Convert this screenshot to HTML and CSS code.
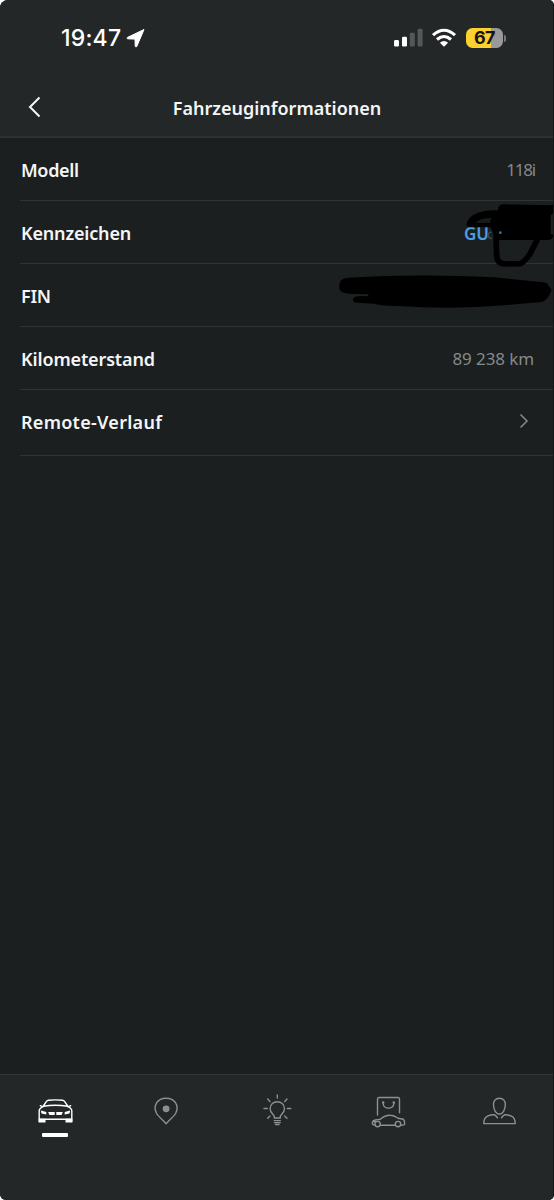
FILE: index.html
```html
<!DOCTYPE html>
<html lang="de">
<head>
<meta charset="utf-8">
<title>Fahrzeuginformationen</title>
<link rel="stylesheet" href="styles.css">
</head>
<body>
<div class="screen">
  <header class="top">
    <div class="status">
      <span class="time">19:47</span>
      <svg class="location" width="20" height="20" viewBox="0 0 20 20"><path d="M18 1.500 1.500 9.400c-.7.400-.5 1.400.3 1.400l7.200.3.200 7c0 .9 1.200 1.100 1.600.3z"/></svg>
      <svg class="signal" width="30" height="20" viewBox="0 0 30 20"><rect x="0" y="12" width="5" height="6.600" rx="1.400"/><rect x="8" y="8.800" width="5" height="9.800" rx="1.400"/><g class="faint"><rect x="15.800" y="4.800" width="5" height="13.800" rx="1.400"/><rect x="23.600" y=".8" width="5" height="17.800" rx="1.400"/></g></svg>
      <svg class="wifi" width="26" height="20" viewBox="0 0 26 20"><path class="arc" d="M2 7.200Q13-2.800 24 7.200M6 11.500q7-6.100 14 0"/><path d="M13 18.700 8.900 14.700q4.100-3.600 8.200 0z"/></svg>
      <span class="battery">67</span>
      <span class="terminal"></span>
    </div>
    <div class="navbar">
      <svg class="back" width="14" height="22" viewBox="0 0 14 22"><path d="M11.500 1.500 2 11l9.500 9.500"/></svg>
      <h1>Fahrzeuginformationen</h1>
    </div>
  </header>
  <main class="list">
    <div class="row"><span class="label modell">Modell</span><span class="value model">118i</span></div>
    <div class="row"><span class="label kennzeichen">Kennzeichen</span><span class="value plate">GÜ</span>
      <svg class="scribble" width="230" height="130" viewBox="0 0 690 390"><path class="stroke" d="M516 145l2 50q0 26 27 27l42-1q11-1 30-28l22-42 8-28"/><path d="M522 54q5-13 20-11l148 3v22l-10 8v56l8 3q0 12-13 15H528q-17-2-18-12l-10-26H438q-12-2-10-12 8-22 30-30 28-12 66-9z"/><path class="gap" d="M454 99q15-16 48-15l-5 15z"/><path class="trace" d="M503 126q-12 1-10 12 2 8 12 7"/><circle class="speck" cx="529" cy="128" r="4"/><path d="M45 290q0-25 27-27 215-13 440-1l145 15q17 2 17 12 12 9 6 18-7 21-25 29-68 5-115 10-150 13-320 2-58-2-70-7l-50-3q-17-1-12-13 7-10 45-6v-6l-58-2q-30-2-30-21z"/></svg>
    </div>
    <div class="row"><span class="label fin">FIN</span></div>
    <div class="row"><span class="label km">Kilometerstand</span><span class="value mileage">89 238 km</span></div>
    <div class="row last"><span class="label remote">Remote-Verlauf</span><svg class="chevron" width="10" height="16" viewBox="0 0 10 16"><path d="m1.500 1.500 6.500 6.500-6.500 6.500"/></svg></div>
  </main>
  <nav class="tabs">
    <div class="tab active"><svg width="40" height="40" viewBox="0 0 40 40"><path d="m8.300 15 3.200-4.700q.7-1 2-1.100 7-.6 14 0 1.300.1 2 1.100l3.200 4.700M8.300 15.200q12-2 24.400 0"/><path d="m5.300 14.700 2.200.9M35.700 14.700l-2.200.9M8.300 15.700Q4 17.500 4.200 20v10.500M32.700 15.700Q37 17.500 36.800 20v10.500M4.200 28l4 .3h24.600l4-.3"/><path class="fill" d="M3.700 27.800h6.800v3.600H3.700zM30.500 27.800h6.800v3.600h-6.800zM5.800 19.400l5.500 1.700v2.300l-4.800-.9zM35.200 19.400l-5.500 1.700v2.300l4.800-.9zM13.200 21h6.500v2.900h-5.300zM21.300 21h6.500l-1.200 2.900h-5.300z"/></svg><span class="indicator"></span></div>
    <div class="tab"><svg width="40" height="40" viewBox="0 0 40 40"><path d="M20.100 32.700c-4-4.300-7.500-7-9.500-10.200C6.500 14.500 11.500 7.300 20.100 7.300s13.600 7.200 9.500 15.200c-2 3.200-5.500 5.900-9.500 10.200z"/><circle class="fill" cx="20.100" cy="17.800" r="3.400"/></svg></div>
    <div class="tab"><svg width="40" height="40" viewBox="0 0 40 40"><path d="M17.300 27v-1.700c-1-2.300-4.200-3.800-4.200-7.600 0-9.200 14.400-9.200 14.400 0 0 3.800-3.200 5.300-4.200 7.600V27zM17.300 29.600h6M17.300 31.600h6M18.500 33.500h3.600M20.300 4v3M7 17.500h3.300M30.300 17.500h3.500M10.700 8.100l2.300 2.300M30 8.100l-2.300 2.300M10.700 27.200 13 24.900M30 27.200l-2.300-2.300"/></svg></div>
    <div class="tab"><svg width="40" height="40" viewBox="0 0 40 40"><path d="M9.500 24V8.200q0-1.700 1.700-1.700h18.600q1.700 0 1.700 1.700v13.500M15.200 12.400c0 6.300 10.600 6.300 10.600 0"/><circle cx="15.200" cy="11.500" r=".6"/><circle cx="25.800" cy="11.500" r=".6"/><circle cx="9.600" cy="33.100" r="2.700"/><circle cx="30" cy="33.100" r="2.700"/><path d="M12.500 34.300h14.700M32.700 34.300l3.200-.4q.8-.2.700-1.200.1-3.500-1.200-4.400l-5.400-1.100q-4-2.900-7.500-2.900-5.500-.2-10.500 4.200-5.200-.1-7 1.600-1.500 3.300.5 3.700l1.400.1M5.500 30.500h2.500"/></svg></div>
    <div class="tab"><svg width="40" height="40" viewBox="0 0 40 40"><path d="M20.400 7.300c-4.100 0-6 2.700-5.900 6.300.1 5.400 2.400 9.600 5.900 9.600s5.800-4.200 5.900-9.600c.1-3.600-1.800-6.300-5.900-6.300zM18.500 26.800q-.9-1.600-3-3-3.200-.3-7 1.300-3.700 1.700-3.700 7.500h31.400q0-5.800-3.700-7.500-3.800-1.600-7-1.300-2.100 1.400-3 3"/></svg></div>
  </nav>
</div>
</body>
</html>
```
FILE: styles.css
```css
* { box-sizing: border-box; }
html { background: #fff; }
body { margin: 0; background: #fff; font-family: "Noto Sans", sans-serif; }
.screen { width: 554px; height: 1200px; display: flex; flex-direction: column; overflow: hidden; border-right: 1px solid #131616; border-radius: 8px 5px 5px 6px; background: #1b1f1f; color: #f4f5f6; }
.top { height: 138px; flex: none; background: #232728; border-bottom: 2px solid #2d3132; }
.status { display: flex; align-items: center; height: 76px; padding-left: 61px; }
.time { width: 65px; font: 500 23px/28px Inter, sans-serif; letter-spacing: .2px; white-space: nowrap; color: #fff; }
.status svg { flex: none; fill: #fff; }
.status .location { stroke: #fff; stroke-width: 1; stroke-linejoin: round; }
.signal { margin-left: 248px; }
.faint { fill: #555859; }
.wifi { margin-left: 7px; }
.status .arc { fill: none; stroke: #fff; stroke-width: 3; }
.battery { width: 37px; height: 20px; margin-left: 9px; border-radius: 6.500px; background: linear-gradient(90deg, #fbd02f 68%, #99999b 68%); color: #151515; font: 700 18px/20px Inter, sans-serif; letter-spacing: -.5px; text-align: center; }
.terminal { width: 2px; height: 7px; margin-left: 1px; border-radius: 0 3px 3px 0; background: #777a7b; }
.navbar { display: grid; grid-template-columns: 60px 1fr 59px; align-items: center; height: 60px; }
.back { margin: 2px 0 0 28px; fill: none; stroke: #f5f6f6; stroke-width: 2; }
h1 { margin: 3px 0 0; font-size: 18px; line-height: 26px; font-weight: 600; text-align: center; white-space: nowrap; }
.list { flex: 1; padding-left: 20px; }
.row { position: relative; display: flex; align-items: center; justify-content: space-between; height: 63px; padding: 1px 19px 0 1px; border-bottom: 1px solid #303435; }
.row.last { height: 66px; padding-right: 24px; padding-bottom: 2px; }
.label { font-size: 18px; font-weight: 600; white-space: nowrap; }
.modell { letter-spacing: -.35px; }
.kennzeichen { letter-spacing: -.18px; }
.fin { letter-spacing: -.3px; }
.km { letter-spacing: -.14px; }
.remote { letter-spacing: .28px; }
.value { font-size: 17px; color: #85898a; white-space: nowrap; }
.model { margin-right: -1px; letter-spacing: -1.200px; }
.mileage { letter-spacing: -.1px; }
.plate { width: 70px; padding-top: 2px; color: #4b9fe9; font-weight: 600; }
.scribble { position: absolute; left: 304px; top: -11px; z-index: 1; fill: #000; }
.scribble .gap { fill: #17191a; }
.scribble .trace { fill: none; stroke: #3f4950; stroke-width: 4; }
.scribble .speck { fill: #3279b5; }
.stroke { fill: none; stroke: #000; stroke-width: 17; stroke-linecap: round; stroke-linejoin: round; }
.chevron { margin-top: -3px; fill: none; stroke: #85898a; stroke-width: 1.500; }
.tabs { display: grid; grid-template-columns: repeat(5, 1fr); height: 126px; flex: none; margin-right: -1px; padding-top: 16px; background: #232728; border-top: 1px solid #34383a; }
.tab { display: flex; flex-direction: column; align-items: center; color: #8c9091; }
.tab svg { fill: none; stroke: currentColor; stroke-width: 1.400; stroke-linejoin: round; stroke-linecap: round; }
.tab .fill { fill: currentColor; stroke: none; }
.active { color: #fff; }
.indicator { width: 26px; height: 4px; margin-top: 2px; border-radius: 1px; background: #fff; }
```
